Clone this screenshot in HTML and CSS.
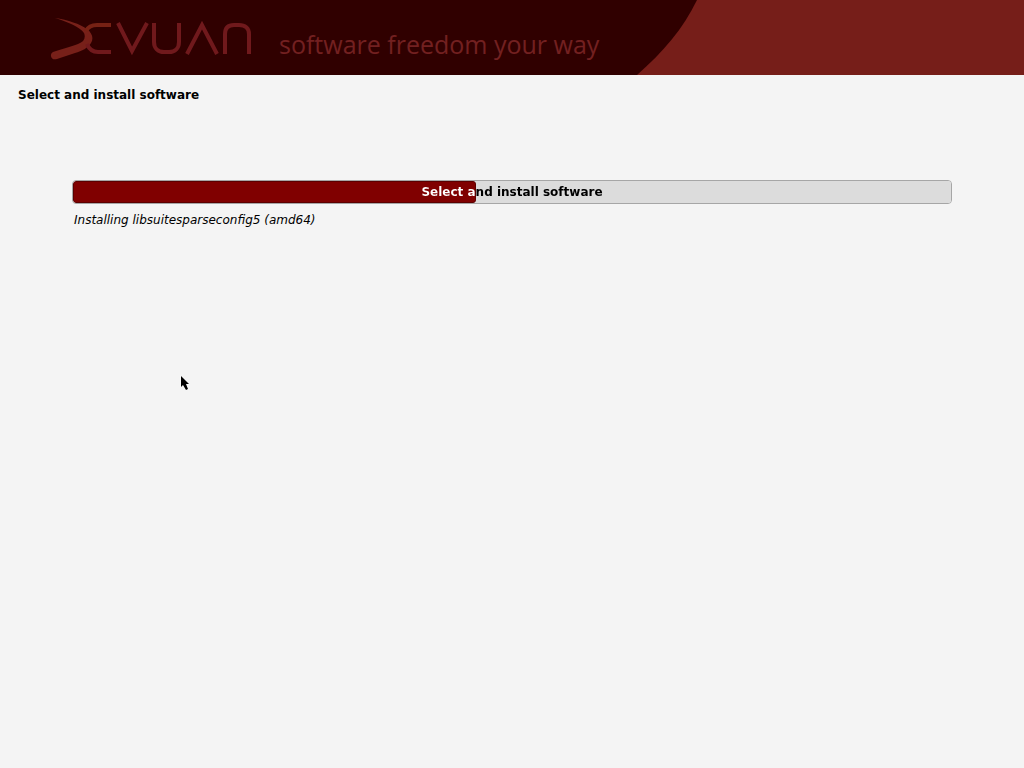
FILE: index.html
```html
<!DOCTYPE html>
<html lang="en">
<head>
  <meta charset="UTF-8" />
  <meta name="viewport" content="width=device-width,initial-scale=1" />
  <title>Select and install software</title>
  <link rel="stylesheet" href="styles.css">
</head>
<body>
  <header class="banner">
    <div class="brand">
      <svg class="logo" width="204" height="45" viewBox="0 0 204 45" role="img" aria-label="Devuan">
        <!-- swoosh -->
        <path class="swoosh" d="M6 3C19 5 31 9 38 14C43 18 45 23 42 28C39 33 33 36 26 38L8 44C2 46 0 39 4 37C12 34 22 32 29 29C35 27 37 23 35 18C31 12 19 7 6 3Z" />
        <path class="stroke warm" d="M62 10H48C42 10 39 12 37 16" />
        <path class="stroke" d="M62 37H49C43 37 40 34 38 29" />
        <path class="stroke" d="M69 8L83 36L98 8" />
        <path class="stroke" d="M105 8V27C105 33 109 37 115 37H120C126 37 130 33 130 27V8" />
        <path class="stroke" d="M138 39L153 10L168 39" />
        <path class="stroke" d="M176 39V19C176 13 179 10 185 10H190C196 10 200 13 200 19V39" />
      </svg>
      <span class="tagline">software freedom your way</span>
    </div>
    <svg class="edge" width="60" height="75" viewBox="0 0 60 75" aria-hidden="true">
      <path d="M0 0H60C46 29 26 52 0 75Z" />
    </svg>
  </header>

  <main>
    <h1>Select and install software</h1>
    <section class="task">
      <div class="meter">
        <progress id="install" max="100" value="45.9"></progress>
        <label class="meter-label" for="install" style="--value: 45.9%">Select and install software</label>
      </div>
      <p class="status">Installing libsuitesparseconfig5 (amd64)</p>
    </section>
  </main>

  <svg class="pointer" width="10" height="16" viewBox="0 0 10 16" aria-hidden="true">
    <path d="M1 1V12L3 10L6 15L8 14L6 9H9Z" />
  </svg>
</body>
</html>
```
FILE: styles.css
```css
* { box-sizing: border-box; }
body { margin: 0; min-height: 100vh; background: #f4f4f4; color: #000; font: 12px/16px "DejaVu Sans", sans-serif; }

.banner { display: flex; height: 75px; background: #761e19; }
.brand { display: flex; align-items: center; gap: 26px; padding: 0 38px 0 49px; background: #300000; }
.logo { flex: none; }
.stroke { fill: none; stroke: #70191c; stroke-width: 4px; }
.warm { stroke: #772114; }
.swoosh { fill: #772019; }
.tagline { padding-top: 12px; color: #732020; font: 400 25px/36px "Open Sans", sans-serif; white-space: nowrap; }
.edge { flex: none; fill: #300000; }

h1 { margin: 12px 18px 0; font-size: 12px; line-height: 16px; font-weight: bold; }
.task { padding: 77px 72px 0; }

.meter { position: relative; height: 24px; }
progress { display: block; width: 100%; height: 24px; appearance: none; border: 1px solid #a6a6a6; border-radius: 4px; overflow: hidden; }
progress::-webkit-progress-bar { background: #dcdcdc; }
progress::-webkit-progress-value { background: #800000; border: 1px solid #5c0000; border-radius: 3px; }
progress::-moz-progress-bar { background: #800000; }

/* the caption turns black where the fill ends */
.meter-label {
  position: absolute;
  inset: 0;
  font-weight: bold;
  line-height: 24px;
  text-align: center;
  color: transparent;
  background: linear-gradient(to right, #fff var(--value), #000 var(--value));
  background-clip: text;
  -webkit-background-clip: text;
}

.status { margin: 8px 2px 0; font-style: italic; }

.pointer { position: absolute; left: 180px; top: 375px; stroke: #fff; stroke-width: 1px; paint-order: stroke; }
```
